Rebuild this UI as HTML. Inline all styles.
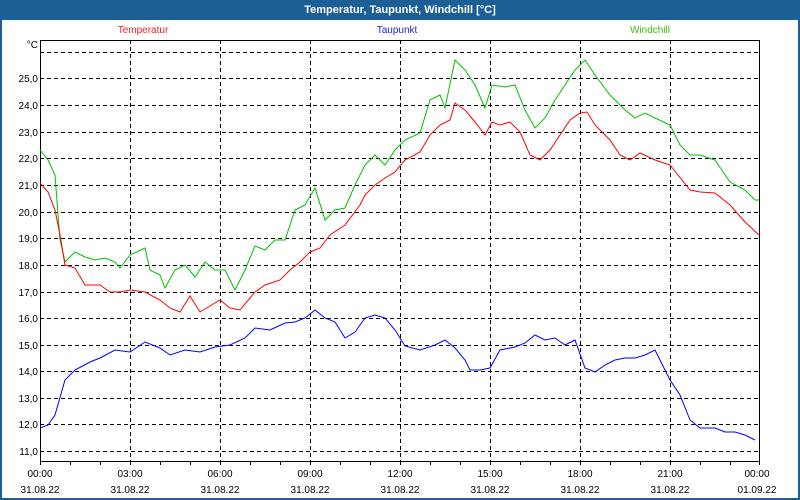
<!DOCTYPE html>
<html><head><meta charset="utf-8"><style>
html,body{margin:0;padding:0;background:#fff}
svg{display:block}
text{font-family:"Liberation Sans",sans-serif;font-size:10px}
</style></head><body>
<svg width="800" height="500" viewBox="0 0 800 500" xmlns="http://www.w3.org/2000/svg">
<rect x="0" y="0" width="800" height="500" fill="#1c5f96"/>
<rect x="2" y="20" width="796" height="478" fill="#fff"/>
<text x="400" y="13" fill="#fff" text-anchor="middle" style="font-weight:bold;font-size:11px">Temperatur, Taupunkt, Windchill [°C]</text>
<text x="143" y="33" fill="#f02020" text-anchor="middle">Temperatur</text>
<text x="397" y="33" fill="#2020e0" text-anchor="middle">Taupunkt</text>
<text x="650" y="33" fill="#40c000" text-anchor="middle">Windchill</text>
<g stroke="#000" stroke-width="1" stroke-dasharray="4,3" fill="none">
<path d="M40 52.5H760M40 78.5H760M40 105.5H760M40 132.5H760M40 158.5H760M40 185.5H760M40 212.5H760M40 238.5H760M40 265.5H760M40 292.5H760M40 318.5H760M40 345.5H760M40 371.5H760M40 398.5H760M40 424.5H760M40 451.5H760"/>
<path d="M130.5 40V461M220.5 40V461M310.5 40V461M400.5 40V461M490.5 40V461M580.5 40V461M670.5 40V461"/>
</g>
<rect x="40.5" y="40.5" width="719" height="421" fill="none" stroke="#000"/>
<g stroke="#000"><path d="M70.5 461v4M100.5 461v4M130.5 461v4M160.5 461v4M190.5 461v4M220.5 461v4M250.5 461v4M280.5 461v4M310.5 461v4M340.5 461v4M370.5 461v4M400.5 461v4M430.5 461v4M460.5 461v4M490.5 461v4M520.5 461v4M550.5 461v4M580.5 461v4M610.5 461v4M640.5 461v4M670.5 461v4M700.5 461v4M730.5 461v4M40.5 461v4M759.5 461v4"/></g>
<g fill="#000" text-anchor="end">
<text x="38" y="48">°C</text>
<text x="38" y="82">25,0</text><text x="38" y="109">24,0</text><text x="38" y="136">23,0</text><text x="38" y="162">22,0</text><text x="38" y="189">21,0</text><text x="38" y="216">20,0</text><text x="38" y="242">19,0</text><text x="38" y="269">18,0</text><text x="38" y="296">17,0</text><text x="38" y="322">16,0</text><text x="38" y="349">15,0</text><text x="38" y="375">14,0</text><text x="38" y="402">13,0</text><text x="38" y="428">12,0</text><text x="38" y="455">11,0</text>
</g>
<g fill="#000" text-anchor="middle">
<text x="40" y="477">00:00</text><text x="130" y="477">03:00</text><text x="220" y="477">06:00</text><text x="310" y="477">09:00</text><text x="400" y="477">12:00</text><text x="490" y="477">15:00</text><text x="580" y="477">18:00</text><text x="670" y="477">21:00</text><text x="757" y="477">00:00</text>
<text x="40" y="493">31.08.22</text><text x="130" y="493">31.08.22</text><text x="220" y="493">31.08.22</text><text x="310" y="493">31.08.22</text><text x="400" y="493">31.08.22</text><text x="490" y="493">31.08.22</text><text x="580" y="493">31.08.22</text><text x="670" y="493">31.08.22</text><text x="757" y="493">01.09.22</text>
</g>
<g fill="none" stroke-width="1">
<polyline stroke="#00c000" points="40,150 48,160 55,175 60,240 65,262 75,252 85,257 95,260 105,258 115,262 120,268 130,255 145,248 150,270 160,275 165,288 175,270 185,265 195,277 205,262 215,270 225,270 235,290 245,270 255,246 265,250 275,240 285,240 295,210 305,205 315,188 325,220 335,210 345,208 355,185 365,165 375,155 385,165 395,150 405,140 420,133 430,100 440,95 445,108 455,60 465,70 475,85 485,108 492,85 505,87 515,85 525,110 535,128 545,118 555,100 565,85 575,70 585,60 595,75 610,95 625,110 635,118 645,113 655,118 670,125 680,145 690,155 700,155 715,160 730,182 745,190 755,200 759,200"/>
<polyline stroke="#ff0000" points="40,183 48,192 55,210 60,235 65,265 75,268 85,285 100,285 110,292 120,292 130,290 145,292 160,300 170,308 180,312 190,296 200,312 210,306 220,300 230,308 240,310 255,292 265,285 280,280 290,270 300,262 310,252 320,248 330,235 345,225 360,205 365,195 375,185 385,178 395,172 405,160 420,152 430,135 440,125 450,120 455,103 465,110 475,122 485,135 492,122 500,125 510,122 520,132 530,155 540,160 550,150 560,135 570,120 580,113 587,112 595,125 610,140 620,155 630,160 640,153 655,160 670,165 690,190 700,192 715,193 730,205 745,222 759,235"/>
<polyline stroke="#0000ff" points="40,428 48,425 55,415 65,380 75,370 90,362 100,358 115,350 130,352 145,342 160,348 170,355 185,350 200,352 215,347 230,345 245,338 255,328 270,330 285,323 295,322 305,318 315,310 325,318 335,322 345,338 355,332 365,318 375,315 385,318 395,330 405,346 420,350 435,345 445,340 455,348 465,360 470,370 480,370 490,368 500,350 515,347 525,343 535,335 545,340 555,338 565,345 575,340 585,368 595,372 605,365 615,360 625,358 635,358 645,355 655,350 660,360 670,380 680,395 690,420 700,428 715,428 725,432 735,432 745,435 755,440"/>
</g>
</svg>
</body></html>
